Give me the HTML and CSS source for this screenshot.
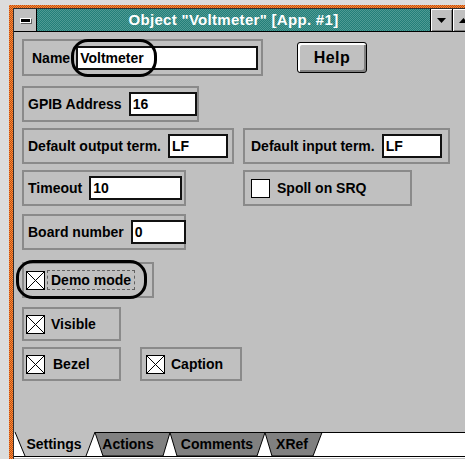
FILE: index.html
```html
<!DOCTYPE html>
<html>
<head>
<meta charset="utf-8">
<title>Object "Voltmeter" [App. #1]</title>
<link rel="stylesheet" href="styles.css">
</head>
<body>
<div class="window">
  <div class="frame">
    <div class="titlebar">
      <div class="sysmenu"><span class="sysdash"></span></div>
      <div class="caption">Object "Voltmeter" [App. #1]</div>
      <div class="tbtn"><svg width="9" height="5" viewBox="0 0 9 5"><path d="M0 0H9L4.5 5Z" fill="#000"/></svg></div>
      <div class="tbtn"><svg width="9" height="5" viewBox="0 0 9 5"><path d="M0 5H9L4.5 0Z" fill="#000"/></svg></div>
    </div>
    <div class="client">
      <div class="row row-name">
        <div class="group g-name">
          <span class="lbl">Name</span>
          <span class="field f-name">Voltmeter</span>
          <span class="ring ring-name"></span>
        </div>
        <button class="btn">Help</button>
      </div>

      <div class="row row-gpib">
        <div class="group g-gpib">
          <span class="lbl">GPIB Address</span>
          <span class="field f-gpib">16</span>
        </div>
      </div>

      <div class="row row-term">
        <div class="group g-out">
          <span class="lbl">Default output term.</span>
          <span class="field f-term">LF</span>
        </div>
        <div class="group g-in">
          <span class="lbl">Default input term.</span>
          <span class="field f-term">LF</span>
        </div>
      </div>

      <div class="row row-timeout">
        <div class="group g-timeout">
          <span class="lbl">Timeout</span>
          <span class="field f-timeout">10</span>
        </div>
        <div class="group g-spoll">
          <svg class="check" width="19" height="19" viewBox="0 0 19 19"><rect x="0.5" y="0.5" width="18" height="18" fill="#fff" stroke="#000"/></svg>
          <span class="lbl">Spoll on SRQ</span>
        </div>
      </div>

      <div class="row row-board">
        <div class="group g-board">
          <span class="lbl">Board number</span>
          <span class="field f-board">0</span>
        </div>
      </div>

      <div class="row row-demo">
        <div class="group g-demo">
          <svg class="check" width="19" height="19" viewBox="0 0 19 19"><rect x="0.5" y="0.5" width="18" height="18" fill="#fff" stroke="#000"/><path d="M1 1L18 18M18 1L1 18" stroke="#000"/></svg>
          <span class="lbl focus">Demo mode</span>
          <span class="ring ring-demo"></span>
        </div>
      </div>

      <div class="row row-visible">
        <div class="group g-visible">
          <svg class="check" width="19" height="19" viewBox="0 0 19 19"><rect x="0.5" y="0.5" width="18" height="18" fill="#fff" stroke="#000"/><path d="M1 1L18 18M18 1L1 18" stroke="#000"/></svg>
          <span class="lbl">Visible</span>
        </div>
      </div>

      <div class="row row-bezel">
        <div class="group g-bezel">
          <svg class="check" width="19" height="19" viewBox="0 0 19 19"><rect x="0.5" y="0.5" width="18" height="18" fill="#fff" stroke="#000"/><path d="M1 1L18 18M18 1L1 18" stroke="#000"/></svg>
          <span class="lbl">Bezel</span>
        </div>
        <div class="group g-caption">
          <svg class="check" width="19" height="19" viewBox="0 0 19 19"><rect x="0.5" y="0.5" width="18" height="18" fill="#fff" stroke="#000"/><path d="M1 1L18 18M18 1L1 18" stroke="#000"/></svg>
          <span class="lbl">Caption</span>
        </div>
      </div>

      <div class="spacer"></div>

      <svg class="tabs" width="460" height="26" viewBox="0 0 460 26">
        <rect x="0" y="0" width="460" height="26" fill="#fff"/>
        <path d="M81 0.5H460" stroke="#000"/>
        <polygon points="1,0 81,0 72,24 11,24" fill="#c0c0c0"/>
        <path d="M1 0L11 24M81 0L72 24" stroke="#000" fill="none"/>
        <polygon points="81,0.5 156,0.5 149,24 89,24" fill="#808080" stroke="#000"/>
        <polygon points="156,0.5 251,0.5 243,24 163,24" fill="#808080" stroke="#000"/>
        <polygon points="251,0.5 308,0.5 299,24 258,24" fill="#808080" stroke="#000"/>
        <path d="M0 24.5H460" stroke="#000"/>
        <text x="40" y="16.5" class="tabtxt">Settings</text>
        <text x="114" y="16.5" class="tabtxt">Actions</text>
        <text x="203" y="16.5" class="tabtxt">Comments</text>
        <text x="278" y="16.5" class="tabtxt">XRef</text>
      </svg>
    </div>
  </div>
</div>
</body>
</html>
```

FILE: styles.css
```css
html, body {
  margin: 0;
  padding: 0;
}

body {
  width: 465px;
  height: 459px;
  overflow: hidden;
  background: #dcdcdc;
  font-family: "Liberation Sans", Arial, sans-serif;
  font-weight: bold;
  font-size: 14px;
  color: #000;
}

/* outer sizing frame, dithered orange */
.window {
  margin: 5px 0 0 9px;
  width: 456px;
  height: 454px;
  padding: 3px 0 0 4px;
  box-sizing: border-box;
  background: repeating-conic-gradient(#c8401a 0 25%, #f29a30 0 50%) 0 0 / 2px 2px;
}

.frame {
  height: 100%;
  display: flex;
  flex-direction: column;
  background: #c0c0c0;
  border-top: 1px solid #303030;
  border-left: 1px solid #303030;
  box-sizing: border-box;
  overflow: hidden;
}

/* caption bar */
.titlebar {
  height: 22px;
  display: flex;
  border-bottom: 1px solid #000;
  flex: none;
}

.sysmenu {
  width: 22px;
  flex: none;
  background: #c0c0c0;
  border-right: 1px solid #000;
  display: flex;
  align-items: center;
  justify-content: center;
}

.sysdash {
  width: 9px;
  height: 3px;
  background: #000;
  border: 1px solid #fff;
  box-shadow: 1px 1px 0 #606060;
}

.caption {
  width: 393px;
  flex: none;
  text-align: center;
  line-height: 22px;
  color: #fff;
  font-size: 15px;
  letter-spacing: 0.3px;
  background: repeating-conic-gradient(#237f79 0 25%, #4f9a94 0 50%) 0 0 / 2px 2px;
}

.tbtn {
  width: 21px;
  flex: none;
  background: #c0c0c0;
  border-left: 1px solid #000;
  box-shadow: inset 1px 1px 0 #fff, inset -1px -1px 0 #808080;
  display: flex;
  align-items: center;
  justify-content: center;
}

/* dialog area */
.client {
  flex: 1;
  display: flex;
  flex-direction: column;
  padding: 7px 0 0 8px;
}

.row {
  display: flex;
  align-items: center;
  flex: none;
}

.row-gpib { margin-top: 10px; }
.row-term { margin-top: 6px; }
.row-timeout { margin-top: 6px; }
.row-board { margin-top: 8px; }
.row-demo { margin-top: 12px; }
.row-visible { margin-top: 9px; }
.row-bezel { margin-top: 6px; }

.group {
  position: relative;
  height: 36px;
  box-sizing: border-box;
  border: 2px solid #8a8a8a;
  display: flex;
  align-items: center;
  padding-left: 4px;
  gap: 7px;
  flex: none;
}

.g-name { width: 241px; height: 37px; padding-left: 8px; gap: 6px; }
.g-gpib { width: 177px; }
.g-out { width: 212px; }
.g-in { width: 207px; margin-left: 9px; padding-left: 6px; }
.g-timeout { width: 164px; }
.g-spoll { width: 169px; margin-left: 57px; padding-left: 6px; }
.g-board { width: 164px; }
.g-demo { width: 132px; padding-left: 2px; gap: 4px; }
.g-visible { width: 99px; height: 34px; padding-left: 2px; gap: 6px; }
.g-bezel { width: 99px; height: 34px; padding-left: 2px; gap: 8px; }
.g-caption { width: 102px; height: 34px; margin-left: 19px; padding-left: 4px; gap: 6px; }

.lbl {
  white-space: nowrap;
}

.focus {
  outline: 1px dashed #606060;
  outline-offset: 1px;
  padding: 0 2px;
}

.field {
  height: 24px;
  box-sizing: border-box;
  background: #fff;
  border: 2px solid #111;
  line-height: 20px;
  padding-left: 2px;
  flex: none;
}

.f-name { width: 182px; }
.f-gpib { width: 68px; }
.f-term { width: 60px; }
.f-timeout { width: 93px; }
.f-board { width: 55px; }

.check {
  display: block;
  flex: none;
}

/* highlight loops drawn over the controls */
.ring {
  position: absolute;
  border: 3px solid #000;
  border-radius: 17px;
  box-sizing: border-box;
  pointer-events: none;
}

.ring-name { left: 47px; top: -2px; width: 86px; height: 38px; }
.ring-demo { left: -8px; top: -4px; width: 131px; height: 39px; }

.btn {
  margin-left: 34px;
  width: 70px;
  height: 31px;
  box-sizing: border-box;
  background: #c0c0c0;
  border: 1px solid #000;
  border-radius: 3px;
  box-shadow: inset 2px 2px 0 #fff, inset -2px -2px 0 #808080;
  font: bold 16px "Liberation Sans", Arial, sans-serif;
  letter-spacing: 0.5px;
  color: #000;
  padding: 0;
  flex: none;
}

.spacer { flex: 1; }

.tabs {
  display: block;
  margin-left: -8px;
  margin-bottom: 1px;
  flex: none;
}

.tabtxt {
  font: bold 14px "Liberation Sans", Arial, sans-serif;
  text-anchor: middle;
  fill: #000;
}
```
